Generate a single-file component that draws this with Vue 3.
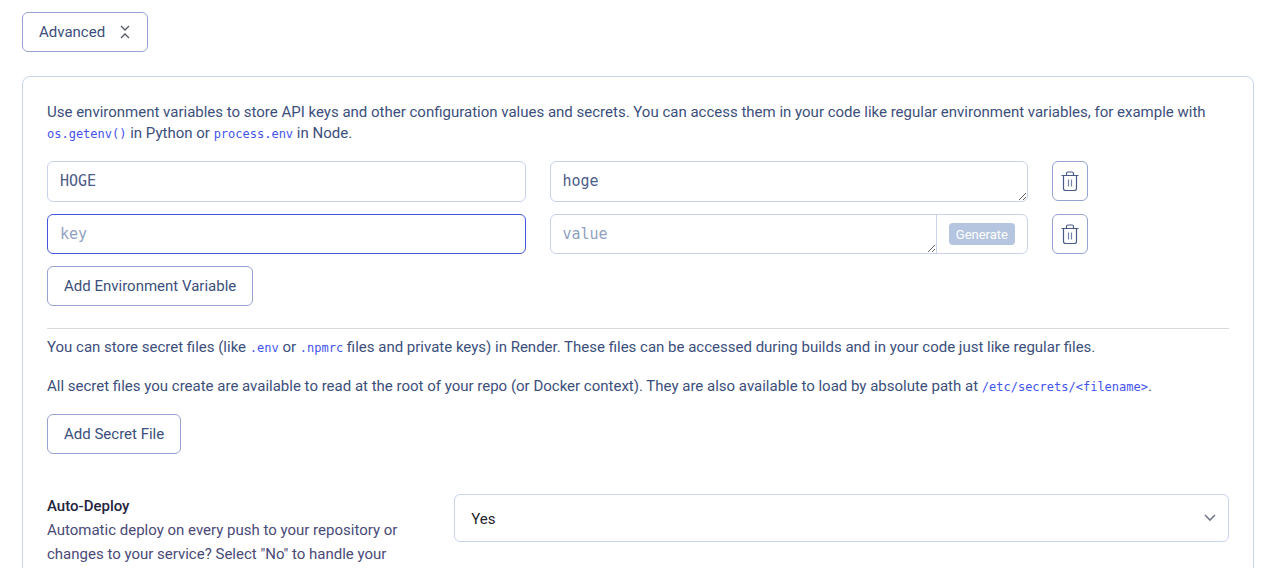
<script setup>
import { ref } from 'vue'

const variables = ref([
  { key: 'HOGE', value: 'hoge' },
  { key: '', value: '' },
])
const autoDeploy = ref('Yes')
</script>

<template>
  <main class="page">
    <button type="button" class="btn advanced">
      Advanced
      <svg class="collapse" viewBox="0 0 12 16" aria-hidden="true">
        <path d="M2 2l4 4 4-4M2 14l4-4 4 4" />
      </svg>
    </button>

    <section class="card">
      <p class="text">
        Use environment variables to store API keys and other configuration values and secrets. You can access them in your
        code like regular environment variables, for example with <code>os.getenv()</code> in Python or
        <code>process.env</code> in Node.
      </p>

      <div class="rows">
        <div v-for="(item, i) in variables" :key="i" class="row" :class="{ filled: item.key }">
          <input v-model="item.key" class="field key" :class="{ active: !item.key }" type="text" placeholder="key" aria-label="key" />
          <div class="field value">
            <textarea v-model="item.value" rows="1" placeholder="value" aria-label="value"></textarea>
            <div v-if="!item.value" class="addon">
              <button type="button" class="generate">Generate</button>
            </div>
          </div>
          <button type="button" class="btn trash" aria-label="Delete">
            <svg viewBox="0 0 18 20" aria-hidden="true">
              <path class="bin" d="M.5 4.5h17M5.5 4.5V2.500q0-1.500 1.500-1.500h4q1.500 0 1.500 1.500v2M2.500 4.500v13q0 2 2 2h9q2 0 2-2v-13" />
              <path class="slats" d="M7.500 8.500v7M10.500 8.500v7" />
            </svg>
          </button>
        </div>
      </div>
      <button type="button" class="btn">Add Environment Variable</button>

      <hr />

      <p class="text">
        You can store secret files (like <code>.env</code> or <code>.npmrc</code> files and private keys) in Render. These
        files can be accessed during builds and in your code just like regular files.
      </p>
      <p class="text spaced">
        All secret files you create are available to read at the root of your repo (or Docker context). They are also
        available to load by absolute path at <code>/etc/secrets/&lt;filename&gt;</code>.
      </p>
      <button type="button" class="btn">Add Secret File</button>

      <div class="setting">
        <div>
          <label for="auto-deploy">Auto-Deploy</label>
          <p class="hint">Automatic deploy on every push to your repository or changes to your service? Select "No" to handle your</p>
        </div>
        <div class="select">
          <select id="auto-deploy" v-model="autoDeploy">
            <option>Yes</option>
            <option>No</option>
          </select>
          <svg viewBox="0 0 12 8" aria-hidden="true"><path d="M1 1l5 5 5-5" /></svg>
        </div>
      </div>
    </section>
  </main>
</template>

<style>
body {
  margin: 0;
  background: #fff;
}
</style>

<style scoped>
* {
  box-sizing: border-box;
}
.page {
  height: 100vh;
  overflow: hidden;
  padding: 12px 22px 0;
  font-family: Roboto, "Liberation Sans", sans-serif;
  font-size: 15px;
  color: #3c4f7c;
}
button,
input,
textarea,
select {
  font: inherit;
  color: inherit;
}
.btn {
  display: inline-flex;
  align-items: center;
  justify-content: center;
  height: 40px;
  padding: 0 16px;
  border: 1px solid #96a2d1;
  border-radius: 6px;
  background: #fff;
}
.advanced {
  display: flex;
  gap: 14px;
}
.collapse {
  width: 12px;
  height: 16px;
  fill: none;
  stroke: #555866;
  stroke-width: 1.3;
}
.card {
  min-height: 100vh;
  margin-top: 24px;
  padding: 25px 24px 24px;
  border: 1px solid #c8d5ec;
  border-radius: 8px;
}
.text {
  margin: 0;
  line-height: 21px;
}
.spaced {
  margin: 18px 0 17px;
}
code {
  font-family: "DejaVu Sans Mono", monospace;
  font-size: 12px;
  line-height: 1;
  color: #4353ee;
}
.rows {
  display: grid;
  gap: 12px;
  margin: 17px 0 12px;
}
.row {
  display: grid;
  grid-template-columns: repeat(12, 1fr);
  column-gap: 24px;
}
.field {
  grid-column: span 5;
  min-width: 0;
  height: 40px;
  border: 1px solid #c9d3ea;
  border-radius: 6px;
  background: #fff;
  font-family: "DejaVu Sans Mono", monospace;
  font-size: 15px;
  color: #4d5c88;
}
.filled .field {
  height: 41px;
}
.key {
  padding: 0 12px 1px;
  outline: none;
}
.active {
  border-color: #4556df;
}
.field::placeholder,
textarea::placeholder {
  color: #919fc2;
  opacity: 1;
}
.value {
  display: flex;
  overflow: hidden;
}
textarea {
  flex: 1;
  min-width: 0;
  height: 100%;
  padding: 8px 12px;
  border: 0;
  outline: none;
  background: transparent;
  line-height: 22px;
  overflow: hidden;
  resize: vertical;
}
.addon {
  display: flex;
  align-items: center;
  padding: 0 12px;
  border-left: 1px solid #c9d3ea;
}
.generate {
  height: 22px;
  padding: 0 7px;
  border: 0;
  border-radius: 4px;
  background: #b5c5df;
  color: #fff;
  font-family: Roboto, "Liberation Sans", sans-serif;
  font-size: 13px;
}
.trash {
  width: 36px;
  padding: 0;
}
.trash svg {
  width: 18px;
  height: 20px;
  fill: none;
  stroke: #4a5b88;
  stroke-width: 1.2;
}
.trash .slats {
  stroke: #7382a8;
}
hr {
  margin: 22px 0 8px;
  border: 0;
  border-top: 1px solid #d9dadd;
}
.setting {
  display: grid;
  grid-template-columns: 1fr 2fr;
  gap: 20px;
  margin-top: 40px;
  line-height: 24px;
}
label {
  display: block;
  font-weight: 500;
  color: #25243f;
}
.hint {
  margin: 0;
  color: #4a4a78;
}
.select {
  display: grid;
  align-items: center;
  align-self: start;
}
.select > * {
  grid-area: 1 / 1;
}
select {
  width: 100%;
  height: 48px;
  padding: 1px 16px 0;
  border: 1px solid #c8d5ec;
  border-radius: 6px;
  background: #fff;
  color: #22242e;
  appearance: none;
}
.select svg {
  justify-self: end;
  width: 12px;
  height: 8px;
  margin-right: 13px;
  fill: none;
  stroke: #74798b;
  stroke-width: 1.6;
  pointer-events: none;
}
</style>
